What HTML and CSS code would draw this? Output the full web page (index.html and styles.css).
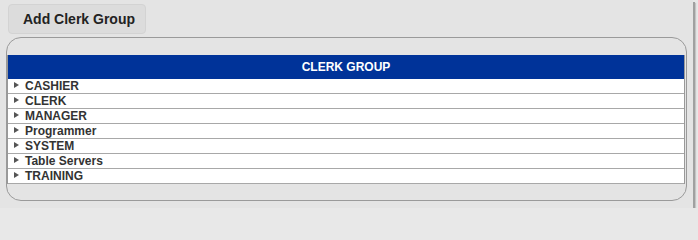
FILE: index.html
```html
<!DOCTYPE html>
<html>
<head>
<meta charset="utf-8">
<link rel="stylesheet" href="styles.css">
</head>
<body>
<div class="page">
  <div class="toolbar">
    <button class="btn">Add Clerk Group</button>
  </div>
  <div class="panel">
    <div class="grid">
      <div class="grid-head">CLERK GROUP</div>
      <div class="row"><span class="tri"></span><span class="label">CASHIER</span></div>
      <div class="row"><span class="tri"></span><span class="label">CLERK</span></div>
      <div class="row"><span class="tri"></span><span class="label">MANAGER</span></div>
      <div class="row"><span class="tri"></span><span class="label">Programmer</span></div>
      <div class="row"><span class="tri"></span><span class="label">SYSTEM</span></div>
      <div class="row"><span class="tri"></span><span class="label">Table Servers</span></div>
      <div class="row"><span class="tri"></span><span class="label">TRAINING</span></div>
    </div>
  </div>
</div>
</body>
</html>
```
FILE: styles.css
```css
html, body {
  margin: 0;
  padding: 0;
  background: #e8e8e8;
}
body {
  font-family: "Liberation Sans", Arial, sans-serif;
}
.page {
  width: 693px;
  height: 208px;
  background: #e4e4e4;
  box-shadow: 2px 2px 0 #a0a0a0, 3px 3px 1px #c4c4c4;
  box-sizing: border-box;
  padding-top: 4px;
}
.toolbar {
  padding-left: 8px;
  height: 30px;
}
.btn {
  width: 138px;
  height: 30px;
  box-sizing: border-box;
  background: #dcdcdc;
  border: 1px solid #d3d3d3;
  border-radius: 4px;
  font-family: "Liberation Sans", Arial, sans-serif;
  font-weight: bold;
  font-size: 14px;
  color: #222;
  text-align: left;
  padding: 0 0 0 14px;
  margin: 0;
}
.panel {
  margin: 3px 0 0 6px;
  width: 681px;
  height: 164px;
  box-sizing: border-box;
  border: 1px solid #9a9a9a;
  border-radius: 15px;
  padding: 17px 1px 0 0;
}
.grid {
  border-left: 1px solid #999;
  border-right: 1px solid #999;
  background: #fff;
}
.grid-head {
  height: 24px;
  line-height: 24px;
  background: #003399;
  color: #fff;
  font-weight: bold;
  font-size: 12px;
  text-align: center;
}
.row {
  height: 14px;
  border-bottom: 1px solid #a8a8a8;
  display: flex;
  align-items: flex-start;
  font-size: 12px;
  font-weight: bold;
  color: #333;
  line-height: 14px;
}
.tri {
  width: 0;
  height: 0;
  border-top: 3px solid transparent;
  border-bottom: 3px solid transparent;
  border-left: 5px solid #555;
  margin: 3px 0 0 6px;
}
.label {
  margin-left: 6px;
}
```
